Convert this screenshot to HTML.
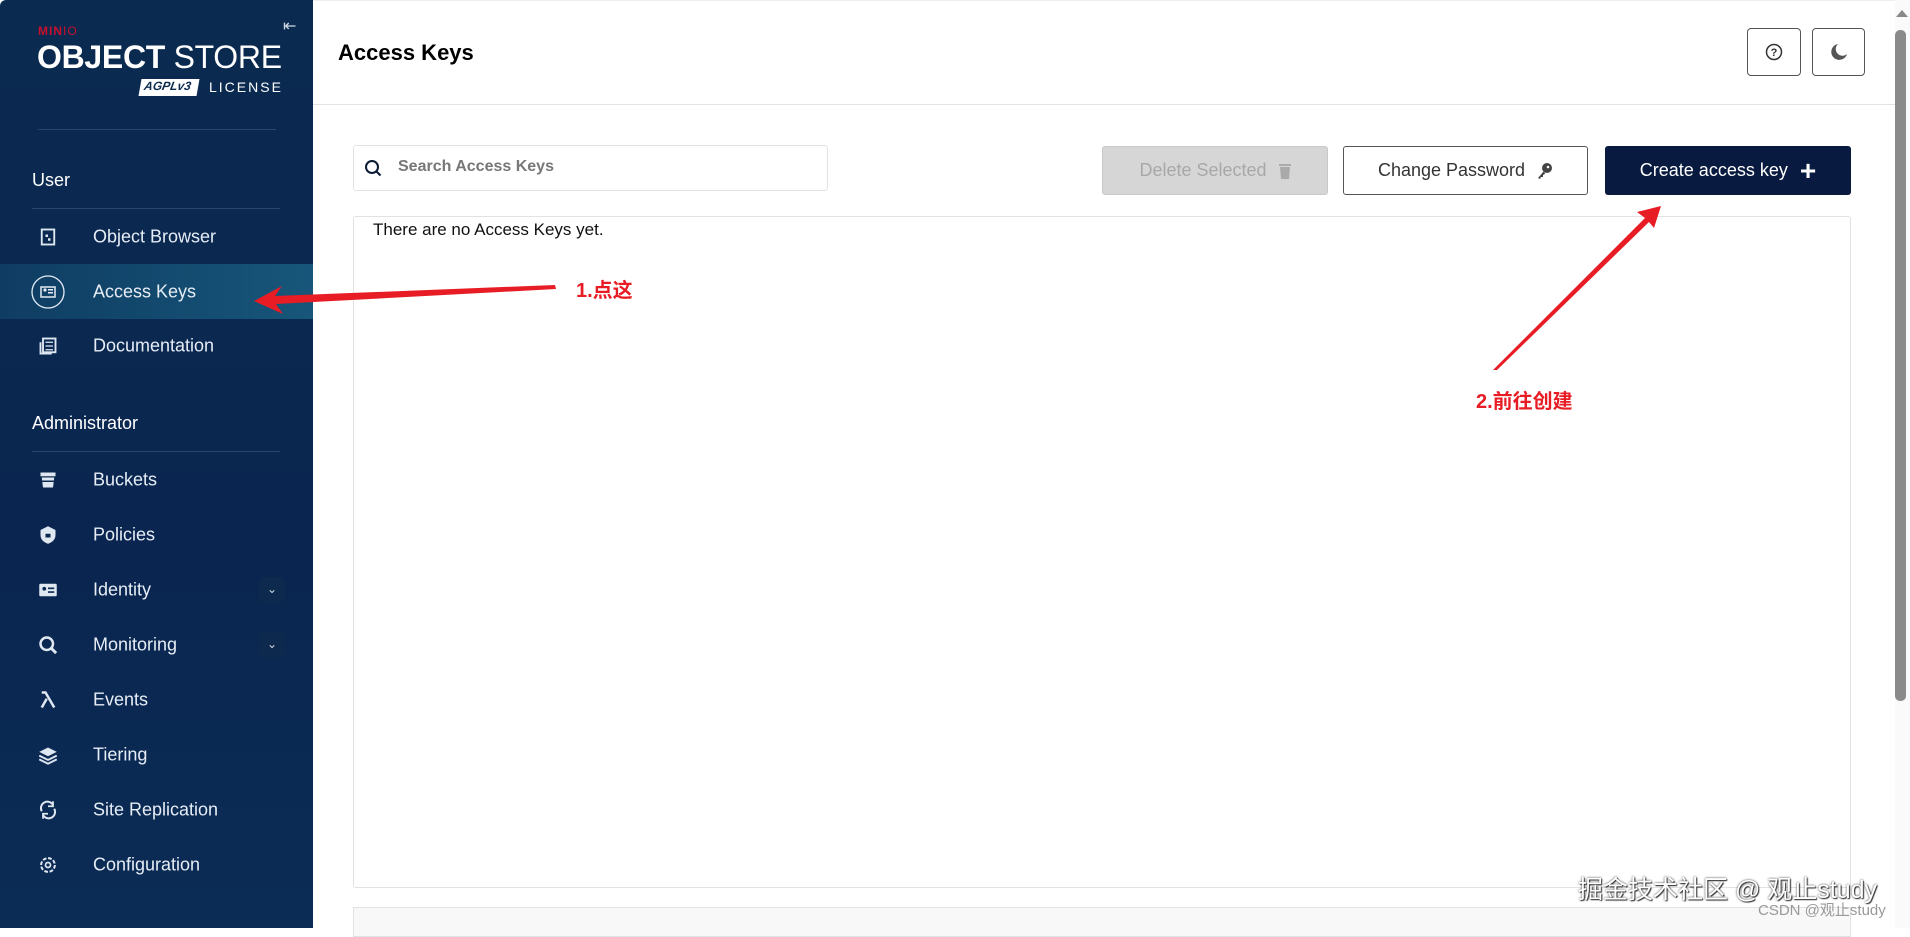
<!DOCTYPE html>
<html><head><meta charset="utf-8"><style>
*{box-sizing:border-box;margin:0;padding:0}
body{width:1910px;height:928px;overflow:hidden;background:#fff;font-family:"Liberation Sans","Noto Sans CJK SC",sans-serif;position:relative}
.sb{position:absolute;left:0;top:0;width:313px;height:928px;background:linear-gradient(180deg,#0b2a50 0%,#0a2650 60%,#0b2c55 100%);border-top-left-radius:6px}
.abs{position:absolute}
.sec{position:absolute;left:32px;color:#fff;font-size:18px}
.div{position:absolute;left:32px;width:248px;height:1px;background:#24476c}
.it{position:absolute;left:0;width:313px;height:55px;color:#e6edf5;font-size:18px}
.it span{position:absolute;left:93px;top:50%;transform:translateY(-50%)}
.it svg{position:absolute;left:38px;top:50%;transform:translateY(-50%)}
.chev{position:absolute;left:259px;top:50%;transform:translateY(-50%);width:26px;height:26px;border-radius:6px;background:#0d2a4e;color:#cfd8e3;font-size:12px;text-align:center;line-height:24px}
.btn{position:absolute;top:146px;height:49px;border-radius:3px;font-size:18px;display:flex;align-items:center;justify-content:center;gap:12px}
</style></head><body>
<div class="sb">
  <div class="abs" style="left:38px;top:24px;color:#c8102e;font-weight:bold;font-size:12px;letter-spacing:1px">MIN<span style="font-weight:normal">IO</span></div>
  <div class="abs" style="left:37px;top:39px;color:#fff;font-size:32px;letter-spacing:-0.3px"><b>OBJECT</b> STORE</div>
  <div class="abs" style="left:140px;top:79px;width:58px;height:17px;background:#fff;color:#0b2a50;font-size:12px;font-style:italic;font-weight:bold;padding-left:4px;transform:skewX(-10deg)">AGPLv3</div>
  <div class="abs" style="left:209px;top:79px;color:#fff;font-size:14px;letter-spacing:2px">LICENSE</div>
  <div class="abs" style="left:283px;top:16px;color:#cfd8e3;font-size:16px">⇤</div>
  <div class="div" style="left:38px;width:238px;top:129px"></div>
  <div class="sec" style="top:170px">User</div>
  <div class="div" style="top:208px"></div>
  <div class="it" style="top:209px"><svg width="20" height="20" viewBox="0 0 16 16"><rect x="3" y="2" width="10" height="12" fill="none" stroke="#dfe7f0" stroke-width="1.5"/><rect x="6" y="6" width="2" height="2" fill="#dfe7f0"/><rect x="8" y="9" width="2" height="2" fill="#dfe7f0"/></svg><span>Object Browser</span></div>
  <div class="it" style="top:264px;background:linear-gradient(90deg,#0f3c62,#17567a)"><svg width="34" height="34" viewBox="0 0 34 34" style="left:31px"><circle cx="17" cy="17" r="16" fill="none" stroke="#e6edf5" stroke-width="1.3"/><rect x="10" y="12" width="14" height="10" fill="none" stroke="#e6edf5" stroke-width="1.5"/><circle cx="14" cy="15" r="1.6" fill="#e6edf5"/><rect x="17" y="14" width="5" height="1.5" fill="#e6edf5"/><rect x="17" y="17" width="5" height="1.5" fill="#e6edf5"/></svg><span>Access Keys</span></div>
  <div class="it" style="top:318px"><svg width="20" height="20" viewBox="0 0 16 16"><rect x="4" y="2" width="10" height="11" fill="none" stroke="#dfe7f0" stroke-width="1.5"/><path d="M2 5v9h9" fill="none" stroke="#dfe7f0" stroke-width="1.5"/><path d="M6 5h6M6 8h6M6 11h6" stroke="#dfe7f0"/></svg><span>Documentation</span></div>
  <div class="sec" style="top:413px">Administrator</div>
  <div class="div" style="top:451px"></div>
  <div class="it" style="top:452px"><svg width="20" height="20" viewBox="0 0 16 16"><path d="M2 2h12v3H2zM3 6h10l-1 8H4z" fill="#dfe7f0"/><path d="M3 9h10" stroke="#0b2a50" stroke-width="1.2"/></svg><span>Buckets</span></div>
  <div class="it" style="top:507px"><svg width="20" height="20" viewBox="0 0 16 16"><path d="M8 1l6 3v4c0 4-3 6-6 7-3-1-6-3-6-7V4z" fill="#dfe7f0"/><rect x="6" y="7" width="4" height="3" fill="#0b2a50"/></svg><span>Policies</span></div>
  <div class="it" style="top:562px"><svg width="20" height="20" viewBox="0 0 16 16"><rect x="1" y="3" width="14" height="10" rx="1" fill="#dfe7f0"/><circle cx="5" cy="7" r="1.5" fill="#0b2a50"/><rect x="8" y="6" width="5" height="1.3" fill="#0b2a50"/><rect x="8" y="9" width="5" height="1.3" fill="#0b2a50"/></svg><span>Identity</span><div class="chev">⌄</div></div>
  <div class="it" style="top:617px"><svg width="20" height="20" viewBox="0 0 16 16"><circle cx="7" cy="7" r="5" fill="none" stroke="#dfe7f0" stroke-width="2"/><path d="M10.5 10.5l4 4" stroke="#dfe7f0" stroke-width="2.4"/></svg><span>Monitoring</span><div class="chev">⌄</div></div>
  <div class="it" style="top:672px"><svg width="20" height="20" viewBox="0 0 16 16"><path d="M3 2h3l7 12M7 7l-4 7" fill="none" stroke="#dfe7f0" stroke-width="2"/></svg><span>Events</span></div>
  <div class="it" style="top:727px"><svg width="20" height="20" viewBox="0 0 16 16"><path d="M8 2l7 3.5-7 3.5-7-3.5z" fill="#dfe7f0"/><path d="M1 8.5l7 3.5 7-3.5M1 11.5l7 3.5 7-3.5" fill="none" stroke="#dfe7f0" stroke-width="1.5"/></svg><span>Tiering</span></div>
  <div class="it" style="top:782px"><svg width="20" height="20" viewBox="0 0 16 16"><path d="M3 9a5 5 0 0 1 9-5M13 7a5 5 0 0 1-9 5" fill="none" stroke="#dfe7f0" stroke-width="1.6"/><path d="M12 1v4h-4M4 15v-4h4" fill="none" stroke="#dfe7f0" stroke-width="1.4"/></svg><span>Site Replication</span></div>
  <div class="it" style="top:837px"><svg width="20" height="20" viewBox="0 0 16 16"><circle cx="8" cy="8" r="5.5" fill="none" stroke="#dfe7f0" stroke-width="1.6" stroke-dasharray="3 1.3"/><circle cx="8" cy="8" r="2" fill="none" stroke="#dfe7f0" stroke-width="1.4"/></svg><span>Configuration</span></div>
</div>

<div class="abs" style="left:313px;top:0;width:1582px;height:1px;background:#eee"></div>
<div class="abs" style="left:338px;top:40px;font-size:22px;font-weight:bold;color:#000">Access Keys</div>
<div class="abs" style="left:1747px;top:28px;width:54px;height:48px;border:1px solid #555;border-radius:4px;display:flex;align-items:center;justify-content:center"><svg width="18" height="18" viewBox="0 0 18 18"><circle cx="9" cy="9" r="7.5" fill="none" stroke="#333" stroke-width="1.5"/><text x="9" y="13" text-anchor="middle" font-size="11" font-weight="bold" fill="#333" font-family="Liberation Sans">?</text></svg></div>
<div class="abs" style="left:1812px;top:28px;width:53px;height:48px;border:1px solid #555;border-radius:4px;display:flex;align-items:center;justify-content:center"><svg width="20" height="20" viewBox="0 0 20 20"><path d="M9 2a8 8 0 1 0 9 10 6 6 0 0 1-9-10z" fill="#555"/></svg></div>
<div class="abs" style="left:313px;top:104px;width:1582px;height:1px;background:#e3e3e3"></div>

<div class="abs" style="left:353px;top:145px;width:475px;height:46px;border:1px solid #e2e2e2;border-radius:3px"></div>
<svg class="abs" style="left:364px;top:159px" width="18" height="18" viewBox="0 0 18 18"><circle cx="8" cy="8" r="6" fill="none" stroke="#0b1a35" stroke-width="2"/><path d="M12.5 12.5l4 4" stroke="#0b1a35" stroke-width="2"/></svg>
<div class="abs" style="left:398px;top:158px;font-size:16px;font-weight:bold;color:#777">Search Access Keys</div>

<div class="btn" style="left:1102px;width:226px;background:#d6d6d6;border:1px solid #c9c9c9;color:#a8a8a8">Delete Selected <svg width="12" height="16" viewBox="0 0 12 16"><rect x="0" y="1" width="12" height="2" fill="#aaa"/><path d="M1 4h10l-1 12H2z" fill="#aaa"/></svg></div>
<div class="btn" style="left:1343px;width:245px;background:#fff;border:1px solid #555;color:#333">Change Password <svg width="16" height="18" viewBox="0 0 16 18"><circle cx="10" cy="6" r="5" fill="#444"/><path d="M7 9l-6 7 2 1 1-2 2 0 0-2 2-1z" fill="#444"/><circle cx="11" cy="5" r="1.3" fill="#fff"/></svg></div>
<div class="btn" style="left:1605px;width:246px;background:#081a3f;color:#fff">Create access key <span style="font-size:28px;font-weight:bold;line-height:1">+</span></div>

<div class="abs" style="left:353px;top:216px;width:1498px;height:672px;border:1px solid #e2e2e2;border-radius:3px"></div>
<div class="abs" style="left:373px;top:220px;font-size:17px;color:#111">There are no Access Keys yet.</div>
<div class="abs" style="left:353px;top:907px;width:1498px;height:30px;border:1px solid #e2e2e2;background:#f8f8f8"></div>

<div class="abs" style="left:1895px;top:0;width:15px;height:928px;background:#fafafa"></div>
<div class="abs" style="left:1896px;top:10px;width:0;height:0;border-left:6px solid transparent;border-right:6px solid transparent;border-bottom:7px solid #888"></div>
<div class="abs" style="left:1895px;top:30px;width:11px;height:671px;background:#8a8a8a;border-radius:5px"></div>

<svg class="abs" style="left:0;top:0" width="1910" height="928">
  <path d="M555 285 L275 296 L282 286 L254 301 L283 314 L276 304 L556 289 Z" fill="#e81c24"/>
  <path d="M1493 370 L1645 218 L1637 212 L1661 206 L1654 228 L1649 222 L1497 370 Z" fill="#e81c24"/>
</svg>
<div class="abs" style="left:576px;top:274px;font-size:20px;font-weight:bold;color:#e81c24">1.点这</div>
<div class="abs" style="left:1476px;top:385px;font-size:20px;font-weight:bold;color:#e81c24">2.前往创建</div>

<div class="abs" style="left:1578px;top:870px;font-size:25px;color:#fff;text-shadow:0 0 2px #333,1px 1px 1px #333">掘金技术社区 @ 观止study</div>
<div class="abs" style="left:1758px;top:899px;font-size:15px;color:#999">CSDN @观止study</div>
</body></html>
